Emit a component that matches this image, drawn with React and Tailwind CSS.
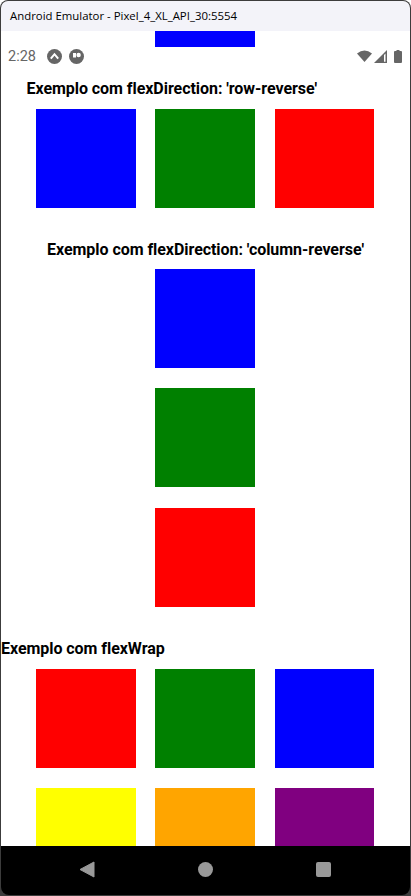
import React from 'react';

const Box = ({ color }) => <div className={`w-[99.5px] h-[99px] shrink-0 ${color}`} />;

const Row = ({ colors, className = '' }) => (
  <div className={`flex pl-[35px] gap-[19.9px] ${className}`}>
    {colors.map((color, i) => (
      <Box key={i} color={color} />
    ))}
  </div>
);

const Heading = ({ children, className = '' }) => (
  <h2 className={`text-[16px] leading-[22px] font-bold tracking-[-0.05px] text-black ${className}`}>{children}</h2>
);

const StatusBar = () => (
  <div className="absolute left-0 right-0 top-[16px] h-[18px] flex items-center justify-between pl-[7px] pr-[8px] text-[#666666]">
    <div className="flex items-center gap-[7px]">
      <span className="text-[14.5px] leading-[18px] mr-[4px] pt-[1px]">2:28</span>
      <svg width="15" height="15" viewBox="0 0 15 15">
        <circle cx="7.5" cy="7.5" r="7.5" fill="#666666" />
        <path d="M3.8 9.6 L7.5 5.2 L11.2 9.6" fill="none" stroke="#fff" strokeWidth="2" />
      </svg>
      <svg width="15" height="15" viewBox="0 0 15 15">
        <circle cx="7.5" cy="7.5" r="7.5" fill="#666666" />
        <path d="M4 4 H7 V8.5 H4 Z" fill="#fff" />
        <circle cx="9.6" cy="6" r="2.2" fill="#fff" />
      </svg>
    </div>
    <div className="flex items-center gap-[2px]">
      <svg width="15" height="12" viewBox="0 0 15 12">
        <path d="M0 3.6 Q7.5 -2.4 15 3.6 L7.5 12 Z" fill="#666666" />
      </svg>
      <svg width="13" height="13" viewBox="0 0 13 13">
        <path d="M13 0 V13 H0 Z" fill="#666666" />
        <path d="M11.5 3.6 V11.8 H10 V5 Z" fill="#fff" />
      </svg>
      <svg width="8" height="13" viewBox="0 0 8 13" className="ml-[5px]">
        <path d="M2.5 0 H5.5 V1 H7 Q8 1 8 2 V12 Q8 13 7 13 H1 Q0 13 0 12 V2 Q0 1 1 1 H2.5 Z" fill="#666666" />
      </svg>
    </div>
  </div>
);

const NavBar = () => (
  <div className="h-[49px] bg-black flex items-center justify-between pl-[78px] pr-[79px] pb-[3px] rounded-b-[8px] shrink-0">
    <svg width="16" height="17" viewBox="0 0 16 17">
      <path d="M15 1 V16 L1 8.5 Z" fill="#999999" stroke="#999999" strokeLinejoin="round" />
    </svg>
    <div className="w-[15px] h-[15px] rounded-full bg-[#999999]" />
    <div className="w-[15px] h-[15px] rounded-[2px] bg-[#999999]" />
  </div>
);

export default function App() {
  return (
    <div className="w-[411px] h-[896px] bg-[#3c3c3c] p-[1px] flex flex-col overflow-hidden rounded-t-[8px] font-['Roboto',sans-serif]">
      <div className="h-[30px] shrink-0 bg-[#f3f3f9] rounded-t-[7px] pl-[9px] flex items-center text-[11.4px] text-black font-['Open_Sans',sans-serif]">
        Android Emulator - Pixel_4_XL_API_30:5554
      </div>
      <div className="relative flex-1 bg-white overflow-hidden min-h-0">
        <div className="pl-[154.4px]">
          <div className="w-[99.5px] h-[16px] bg-[#0000ff]" />
        </div>
        <Heading className="mt-[31px] pl-[25.5px]">Exemplo com flexDirection: 'row-reverse'</Heading>
        <Row className="mt-[9px]" colors={['bg-[#0000ff]', 'bg-[#008000]', 'bg-[#ff0000]']} />
        <Heading className="mt-[31px] text-center">Exemplo com flexDirection: 'column-reverse'</Heading>
        <div className="mt-[8px] flex flex-col items-start pl-[154.4px] gap-[20.4px]">
          <Box color="bg-[#0000ff]" />
          <Box color="bg-[#008000]" />
          <Box color="bg-[#ff0000]" />
        </div>
        <Heading className="mt-[31.5px]">Exemplo com flexWrap</Heading>
        <Row className="mt-[9px]" colors={['bg-[#ff0000]', 'bg-[#008000]', 'bg-[#0000ff]']} />
        <Row className="mt-[20px]" colors={['bg-[#ffff00]', 'bg-[#ffa500]', 'bg-[#800080]']} />
        <StatusBar />
      </div>
      <NavBar />
    </div>
  );
}
